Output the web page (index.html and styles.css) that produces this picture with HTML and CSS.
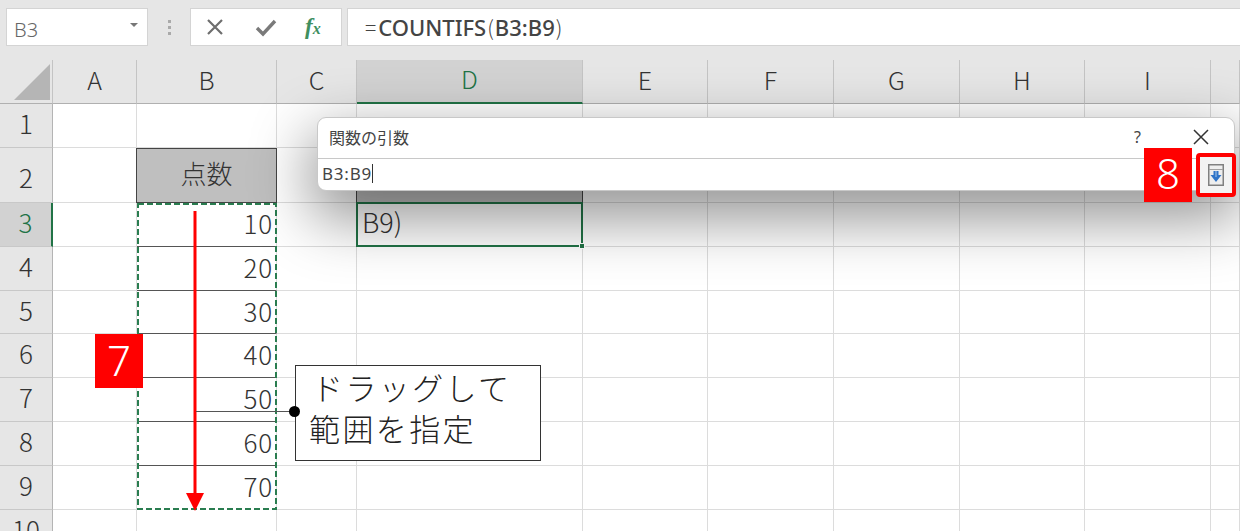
FILE: index.html
```html
<!DOCTYPE html>
<html lang="ja">
<head>
<meta charset="utf-8">
<title>関数の引数</title>
<link rel="stylesheet" href="styles.css">
</head>
<body>
<div class="app">
  <div class="toolbar">
    <div class="namebox"><span>B3</span><i class="caret"></i></div>
    <div class="grip"><i></i><i></i><i></i></div>
    <div class="fxbox">
      <svg class="tool" width="24" height="24" viewBox="0 0 24 24"><path d="M5 5 L19 19 M19 5 L5 19" stroke="#6e6e6e" stroke-width="2.2" fill="none"/></svg>
      <svg class="tool" width="24" height="24" viewBox="0 0 24 24"><path d="M3 13 L9 19 L21 6" stroke="#7a7a7a" stroke-width="3.4" fill="none"/></svg>
      <span class="fx">f<small>x</small></span>
    </div>
    <div class="formula"><span class="eq">=</span><b>COUNTIFS</b><span class="paren">(</span><b>B3:B9</b><span class="paren">)</span></div>
  </div>

  <div class="sheet">
    <div class="corner"><svg width="36" height="36" viewBox="0 0 36 36"><path d="M36 0 V36 H0 Z" fill="#b5b5b5"/></svg></div>
    <div class="ch">A</div><div class="ch">B</div><div class="ch">C</div><div class="ch ch-on">D</div><div class="ch">E</div><div class="ch">F</div><div class="ch">G</div><div class="ch">H</div><div class="ch">I</div><div class="ch"></div>

    <div class="rh">1</div><div class="c"></div><div class="c"></div><div class="c"></div><div class="c"></div><div class="c"></div><div class="c"></div><div class="c"></div><div class="c"></div><div class="c"></div><div class="c"></div>

    <div class="rh rh-tall">2</div><div class="c"></div><div class="c head">点数</div><div class="c"></div><div class="c head d2"></div><div class="c"></div><div class="c"></div><div class="c"></div><div class="c"></div><div class="c"></div><div class="c"></div>

    <div class="rh rh-on">3</div><div class="c"></div><div class="c num">10</div><div class="c"></div><div class="c active">B9)<i class="handle"></i></div><div class="c"></div><div class="c"></div><div class="c"></div><div class="c"></div><div class="c"></div><div class="c"></div>

    <div class="rh">4</div><div class="c"></div><div class="c num">20</div><div class="c"></div><div class="c"></div><div class="c"></div><div class="c"></div><div class="c"></div><div class="c"></div><div class="c"></div><div class="c"></div>

    <div class="rh">5</div><div class="c"></div><div class="c num">30</div><div class="c"></div><div class="c"></div><div class="c"></div><div class="c"></div><div class="c"></div><div class="c"></div><div class="c"></div><div class="c"></div>

    <div class="rh">6</div><div class="c"></div><div class="c num">40</div><div class="c"></div><div class="c"></div><div class="c"></div><div class="c"></div><div class="c"></div><div class="c"></div><div class="c"></div><div class="c"></div>

    <div class="rh">7</div><div class="c"></div><div class="c num">50</div><div class="c"></div><div class="c"></div><div class="c"></div><div class="c"></div><div class="c"></div><div class="c"></div><div class="c"></div><div class="c"></div>

    <div class="rh">8</div><div class="c"></div><div class="c num">60</div><div class="c"></div><div class="c"></div><div class="c"></div><div class="c"></div><div class="c"></div><div class="c"></div><div class="c"></div><div class="c"></div>

    <div class="rh">9</div><div class="c"></div><div class="c num nl">70</div><div class="c"></div><div class="c"></div><div class="c"></div><div class="c"></div><div class="c"></div><div class="c"></div><div class="c"></div><div class="c"></div>

    <div class="rh">10</div><div class="c"></div><div class="c"></div><div class="c"></div><div class="c"></div><div class="c"></div><div class="c"></div><div class="c"></div><div class="c"></div><div class="c"></div><div class="c"></div>
  </div>

  <svg class="marquee" width="140" height="307" viewBox="0 0 140 307"><rect x="1" y="1" width="138" height="305" fill="none" stroke="#2a7d50" stroke-width="2" stroke-dasharray="6 3"/></svg>
  <svg class="arrow" width="24" height="304" viewBox="0 0 24 304"><path d="M12 3 V288" stroke="#ff0000" stroke-width="3" fill="none"/><path d="M3 285 H21 L12 303 Z" fill="#ff0000"/></svg>
  <div class="badge b7">7</div>

  <div class="leader"><i class="dot"></i></div>
  <div class="note"><span class="note-first">ドラッグして</span><br>範囲を指定</div>

  <div class="dialog">
    <div class="dlg-title"><span class="dlg-name">関数の引数</span><span class="help">?</span>
      <svg class="close" width="16" height="16" viewBox="0 0 16 16"><path d="M1 1 L15 15 M15 1 L1 15" stroke="#333" stroke-width="1.500" fill="none"/></svg>
    </div>
    <div class="dlg-input"><span>B3:B9</span><i class="cursor"></i></div>
  </div>

  <div class="badge b8">8</div>
  <div class="expand">
    <svg width="16" height="22" viewBox="0 0 16 22"><rect x="0.750" y="0.750" width="14.500" height="20.500" fill="#eeeeee" stroke="#808080" stroke-width="1.500"/><path d="M1 5.500 H15" stroke="#a0a0a0"/><path d="M5.500 7 H10.500 V11 H13.500 L8 18 L2.500 11 H5.500 Z" fill="#2f74c8"/><path d="M7.500 7 H8.500 V13 H7.500 Z" fill="#a9c8ea"/></svg>
  </div>
</div>
</body>
</html>
```

FILE: styles.css
```css
* { box-sizing: border-box; }
html, body { margin: 0; padding: 0; }
body {
  width: 1240px;
  height: 531px;
  overflow: hidden;
  background: #fff;
  font-family: "Noto Sans CJK JP", "Noto Sans", sans-serif;
  font-weight: 300;
  color: #333;
}
.app { position: relative; width: 1240px; height: 531px; overflow: hidden; }

.toolbar {
  height: 60px;
  background: #e6e6e6;
  display: flex;
  align-items: flex-start;
  padding: 8px 0 0 6px;
}
.namebox {
  width: 142px;
  height: 38px;
  background: #fff;
  border: 1px solid #d4d4d4;
  display: flex;
  align-items: center;
  justify-content: space-between;
  padding: 4px 9px 0 7px;
  font-size: 20px;
  color: #666;
  font-family: "Noto Sans", sans-serif;
}
.caret {
  width: 0; height: 0;
  border-left: 4px solid transparent;
  border-right: 4px solid transparent;
  border-top: 4px solid #777;
  margin-top: -8px;
}
.grip {
  width: 42px;
  height: 38px;
  display: flex;
  flex-direction: column;
  align-items: center;
  justify-content: center;
  gap: 3px;
}
.grip i { width: 3px; height: 3px; background: #aaa; }
.fxbox {
  width: 152px;
  height: 38px;
  background: #fff;
  border: 1px solid #d4d4d4;
  display: flex;
  align-items: center;
  gap: 27px;
  padding-left: 12px;
}
.tool { flex: none; }
.fx {
  font-family: "Liberation Serif", serif;
  font-style: italic;
  font-weight: 700;
  font-size: 23px;
  color: #3f8f5f;
}
.fx small { font-size: 16px; }
.formula {
  flex: 1;
  height: 38px;
  margin-left: 5px;
  background: #fff;
  border: 1px solid #d4d4d4;
  border-right: 0;
  display: flex;
  align-items: center;
  padding-left: 17px;
  font-size: 21px;
  line-height: 1;
  color: #444;
}
.formula b { font-family: "Noto Sans", sans-serif; font-weight: 500; font-size: 22px; }
.eq { font-size: 21px; margin-right: 2px; }
.paren { font-size: 21px; padding: 0 1px; }

.sheet {
  display: grid;
  grid-template-columns: 53px 84px 140px 80px 226px 125px 126px 126px 125px 126px 29px;
  grid-template-rows: 44px 44px 55px 44px 44px 43px 44px 44px 44px 44px 44px;
}
.corner {
  background: #e6e6e6;
  border-right: 1px solid #c4c4c4;
  border-bottom: 1px solid #b0b0b0;
  display: flex;
  align-items: flex-end;
  justify-content: flex-end;
  padding: 0 2px 3px 0;
}
.ch {
  background: #e6e6e6;
  border-right: 1px solid #c4c4c4;
  border-bottom: 1px solid #b0b0b0;
  display: flex;
  align-items: center;
  justify-content: center;
  font-size: 25px;
  color: #333;
  padding-bottom: 6px;
}
.ch-on {
  background: #d2d2d2;
  color: #217346;
  border-bottom: 2px solid #217346;
}
.rh {
  background: #e6e6e6;
  border-right: 1px solid #b4b4b4;
  border-bottom: 1px solid #c8c8c8;
  display: flex;
  align-items: center;
  justify-content: center;
  font-size: 26px;
  color: #333;
  padding-bottom: 6px;
}
.rh-tall { padding-bottom: 0; padding-top: 2px; }
.rh-on { background: #d2d2d2; color: #217346; border-right: 2px solid #217346; }
.c {
  border-right: 1px solid #dcdcdc;
  border-bottom: 1px solid #dcdcdc;
  font-size: 25px;
  color: #333;
}
.head {
  background: #bfbfbf;
  border: 1px solid #444;
  margin-left: -1px;
  display: flex;
  align-items: center;
  justify-content: center;
  font-size: 26px;
  padding-bottom: 6px;
}
.num {
  border-bottom: 1px solid #555;
  text-align: right;
  padding: 0 3px 0 0;
  font-size: 26px;
  letter-spacing: 0.800px;
  line-height: 40px;
}
.nl { border-bottom-color: transparent; }
.active {
  position: relative;
  border: 2px solid #217346;
  margin: -1px 0 0 -1px;
  padding: 0 0 0 4px;
  font-size: 27px;
  line-height: 36px;
}
.handle {
  position: absolute;
  right: -4px;
  bottom: -4px;
  width: 6px;
  height: 6px;
  background: #217346;
  border: 1px solid #fff;
}

.marquee { position: absolute; left: 137px; top: 203px; }
.arrow { position: absolute; left: 183px; top: 208px; }
.badge {
  position: absolute;
  background: #ff0000;
  color: #fff;
  display: flex;
  align-items: center;
  justify-content: center;
  font-family: "Noto Sans", sans-serif;
  font-weight: 300;
}
.b7 { left: 95px; top: 334px; width: 48px; height: 54px; font-size: 42px; padding-bottom: 4px; }
.b8 { left: 1144px; top: 148px; width: 48px; height: 54px; font-size: 42px; padding-bottom: 6px; }
.leader {
  position: absolute;
  left: 196px;
  top: 411px;
  width: 99px;
  height: 1px;
  background: #555;
  z-index: 2;
}
.dot {
  position: absolute;
  right: -5px;
  top: -5px;
  width: 11px;
  height: 11px;
  border-radius: 50%;
  background: #000;
}
.note {
  position: absolute;
  left: 295px;
  top: 365px;
  width: 246px;
  height: 96px;
  background: #fff;
  border: 1px solid #333;
  padding: 0 0 0 13px;
  font-size: 31px;
  line-height: 41px;
  letter-spacing: 2.400px;
  color: #222;
  white-space: nowrap;
}
.note-first { margin-left: 3px; }

.dialog {
  position: absolute;
  left: 317px;
  top: 117px;
  width: 918px;
  height: 74px;
  background: #fff;
  border: 1px solid #c8c8c8;
  border-radius: 9px;
  box-shadow: 0 22px 60px 6px rgba(0,0,0,.42);
}
.dlg-title {
  height: 41px;
  border-bottom: 1px solid #c8c8c8;
  display: flex;
  align-items: center;
  padding: 0 25px 2px 11px;
  font-size: 16px;
  font-weight: 400;
  color: #444;
}
.dlg-name { flex: 1; }
.help { margin-right: 52px; font-size: 16px; font-family: "Noto Sans", sans-serif; }
.dlg-input {
  height: 31px;
  display: flex;
  align-items: center;
  padding: 0 0 3px 4px;
  font-size: 17px;
  letter-spacing: 0.800px;
  font-weight: 400;
  color: #444;
  font-family: "Noto Sans", sans-serif;
}
.cursor { width: 1px; height: 19px; background: #333; }

.expand {
  position: absolute;
  left: 1196px;
  top: 153px;
  width: 40px;
  height: 44px;
  border: 4px solid #ff0000;
  border-radius: 4px;
  background: #f3f3f3;
  display: flex;
  align-items: center;
  justify-content: center;
}
```
